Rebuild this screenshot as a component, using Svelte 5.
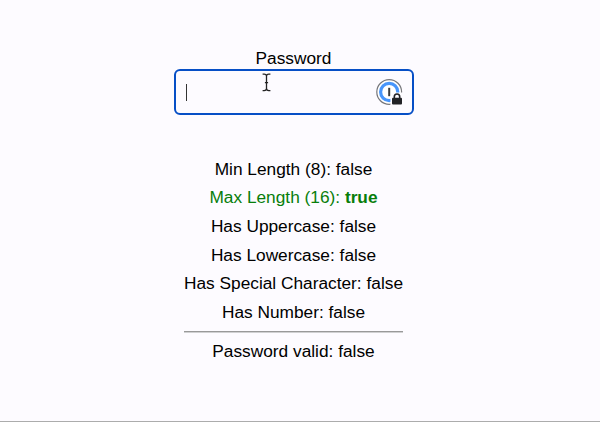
<script>
  let password = $state('');

  const rules = $derived([
    { label: 'Min Length (8)', ok: password.length >= 8 },
    { label: 'Max Length (16)', ok: password.length <= 16 },
    { label: 'Has Uppercase', ok: /[A-Z]/.test(password) },
    { label: 'Has Lowercase', ok: /[a-z]/.test(password) },
    { label: 'Has Special Character', ok: /[^A-Za-z0-9]/.test(password) },
    { label: 'Has Number', ok: /[0-9]/.test(password) }
  ]);
  const valid = $derived(rules.every((rule) => rule.ok));
</script>

<main>
  <label for="password">Password</label>
  <div class="field" id="password">
    <span class="caret"></span>
    <span class="value">{password}</span>
    <svg class="manager" width="28" height="28" viewBox="0 0 28 28">
      <circle cx="13.2" cy="14" r="12.4" fill="#fff" stroke="#77777b" stroke-width="1.2" />
      <circle cx="13.2" cy="14" r="8.6" fill="none" stroke="#4795fb" stroke-width="3.2" />
      <path d="M13.2 9.8v8.4" stroke="#3c3c3e" stroke-width="2" />
      <path d="M14.4 28V18l4-3.4H28V28z" fill="#fdfbff" />
      <path d="M18.3 20.5v-1.8a2.6 2.6 0 0 1 5.4 0v1.8" fill="none" stroke="#222226" stroke-width="1.6" />
      <rect x="16" y="19.7" width="10" height="6.8" rx="1" fill="#222226" />
    </svg>
    <svg class="pointer" width="9" height="19" viewBox="0 0 9 19">
      <path d="M.6 1.2h1.6q2.3 0 2.3 2v12.4q0 2-2.3 2H.6M8.4 1.2H6.8q-2.3 0-2.3 2v12.4q0 2 2.3 2h1.6M2.9 9.6h3.2" fill="none" stroke="#222" stroke-width="1.3" />
    </svg>
  </div>

  <section>
    {#each rules as rule}
      <div class="rule" class:ok={rule.ok}>{rule.label}: <span>{rule.ok}</span></div>
    {/each}
    <hr />
    <div class="rule" class:ok={valid}>Password valid: <span>{valid}</span></div>
  </section>
</main>

<style>
  :global(body) {
    background: #fdfbff;
  }
  main {
    box-sizing: border-box;
    height: 422px;
    padding: 46px 13px 0 0;
    border-bottom: 1px solid #acacac;
    display: flex;
    flex-direction: column;
    align-items: center;
    font: 17.3px/28.7px "Liberation Sans", Arial, sans-serif;
    color: #000;
  }
  label {
    height: 23px;
    line-height: 24px;
  }
  .field {
    box-sizing: border-box;
    position: relative;
    display: flex;
    align-items: center;
    width: 240px;
    height: 46px;
    padding: 0 8px 0 10px;
    border: 2px solid #064fc6;
    border-radius: 6px;
  }
  .caret {
    width: 1px;
    height: 17px;
    background: #333;
  }
  .value {
    flex: 1;
  }
  .pointer {
    position: absolute;
    left: 86px;
    top: 2px;
  }
  section {
    margin-top: 39.5px;
  }
  .rule {
    text-align: center;
    white-space: nowrap;
  }
  .ok {
    color: #087e0b;
  }
  .ok span {
    font-weight: bold;
  }
  hr {
    margin: 4px 0 4.5px;
    border: 0;
    border-top: 1px solid #999;
    border-bottom: 1px solid #d0d0d2;
  }
</style>
